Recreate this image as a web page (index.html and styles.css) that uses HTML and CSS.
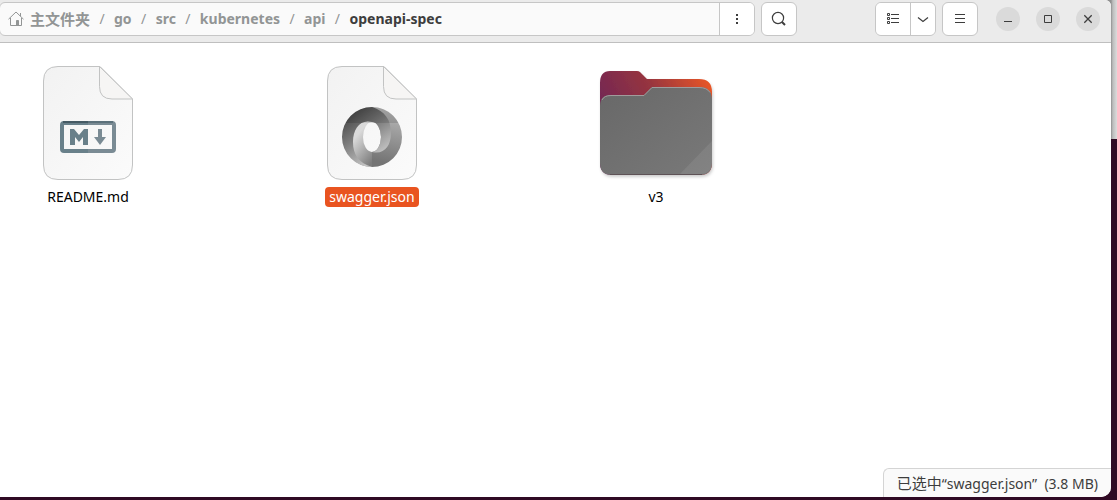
FILE: index.html
```html
<!DOCTYPE html>
<html lang="zh-CN">
<head>
    <meta charset="UTF-8">
    <meta name="viewport" content="width=device-width, initial-scale=1.0">
    <title>openapi-spec</title>
    <link rel="stylesheet" href="styles.css">
</head>
<body>
    <div class="window">
        <header class="header">
            <div class="pathbar">
                <nav class="crumbs">
                    <a class="crumb cjk" href="#">
                        <svg width="16" height="16" viewBox="0 0 16 16" fill="none" stroke="#929595">
                            <path d="M.5 8.200 8 1l7.500 7.200M2.500 7v7.500h11V7M12.500 5V2"/>
                            <path d="M8.500 9.500h2v5h-2z" fill="#929595"/>
                        </svg>主文件夹</a>
                    <span class="slash">/</span>
                    <a class="crumb" href="#">go</a>
                    <span class="slash">/</span>
                    <a class="crumb" href="#">src</a>
                    <span class="slash">/</span>
                    <a class="crumb" href="#">kubernetes</a>
                    <span class="slash">/</span>
                    <a class="crumb" href="#">api</a>
                    <span class="slash">/</span>
                    <a class="crumb current" href="#">openapi-spec</a>
                </nav>
                <button class="path-menu" aria-label="菜单">
                    <svg width="16" height="16" viewBox="0 0 16 16" fill="#3d3d3d"><path d="M7 3h2v2H7zM7 7h2v2H7zM7 11h2v2H7z"/></svg>
                </button>
            </div>
            <button class="tool search" aria-label="搜索">
                <svg width="16" height="16" viewBox="0 0 16 16" fill="none" stroke="#3d3d3d"><circle cx="7" cy="7" r="5.600" stroke-width="1.200"/><path d="m11 11 3 3" stroke-width="2"/></svg>
            </button>
            <div class="view-switch">
                <button class="view-list" aria-label="列表">
                    <svg width="16" height="16" viewBox="0 0 16 16" fill="none" stroke="#3d3d3d"><path d="M2.500 2.500h2v2h-2zM2.500 6.500h2v2h-2zM2.500 10.500h2v2h-2zM6 3.500h8M6 7.500h8M6 11.500h8"/></svg>
                </button>
                <button class="view-options" aria-label="视图选项">
                    <svg width="12" height="16" viewBox="0 0 12 16" fill="none" stroke="#3d3d3d" stroke-width="1.200"><path d="m1 6.500 5 4 5-4"/></svg>
                </button>
            </div>
            <button class="tool" aria-label="主菜单">
                <svg width="16" height="16" viewBox="0 0 16 16" stroke="#3d3d3d"><path d="M3 3.500h10M3 7.500h10M3 11.500h10"/></svg>
            </button>
            <div class="controls">
                <button class="control" aria-label="最小化">
                    <svg width="16" height="16" viewBox="0 0 16 16" stroke="#3d3d3d"><path d="M4 10.500h8"/></svg>
                </button>
                <button class="control" aria-label="最大化">
                    <svg width="16" height="16" viewBox="0 0 16 16" fill="none" stroke="#3d3d3d"><path d="M4.500 4.500h7v7h-7z"/></svg>
                </button>
                <button class="control" aria-label="关闭">
                    <svg width="16" height="16" viewBox="0 0 16 16" stroke="#3d3d3d" stroke-width="1.300"><path d="m4.300 4.300 7.400 7.400M11.700 4.300l-7.400 7.400"/></svg>
                </button>
            </div>
        </header>

        <main class="files">
            <div class="file">
                <svg class="icon" width="120" height="120" viewBox="0 0 120 120">
                    <defs>
                        <linearGradient id="paper" x1="0" y1="0" x2="1" y2="1">
                            <stop offset="0" stop-color="#f2f2f2"/>
                            <stop offset="1" stop-color="#fbfbfb"/>
                        </linearGradient>
                    </defs>
                    <path d="M30 3.500h42L104.500 36v66q0 14.500-14.500 14.500H30q-14.500 0-14.500-14.500V18Q15.500 3.500 30 3.500z" fill="url(#paper)" stroke="#c2c3c3"/>
                    <path d="M71.500 3.500v20q0 12.500 12.500 12.500h20.500z" fill="#f6f5f4" stroke="#c2c3c3"/>
                    <path d="M60 60H36q-2 0-2 2v24q0 2 2 2h24" fill="none" stroke="#69808a" stroke-width="4"/>
                    <path d="M60 60h24q2 0 2 2v24q0 2-2 2H60" fill="none" stroke="#7a8b94" stroke-width="4"/>
                    <path d="M60 59H35" stroke="#455a64" stroke-width="2"/>
                    <path d="M60 59h25" stroke="#5c717b" stroke-width="2"/>
                    <path d="M42 82V66h4l5 6 5-6h4v16h-5v-8l-4 5-4-5v8z" fill="#69808a"/>
                    <path d="M70 66h4v8h4l-6 8-6-8h4z" fill="#7a8b94"/>
                </svg>
                <span class="name">README.md</span>
            </div>
            <div class="file">
                <svg class="icon" width="120" height="120" viewBox="0 0 120 120">
                    <defs>
                        <linearGradient id="ringOuter" gradientUnits="userSpaceOnUse" x1="44" y1="46" x2="74" y2="88">
                            <stop offset="0" stop-color="#484848"/>
                            <stop offset=".45" stop-color="#7c7c7c"/>
                            <stop offset="1" stop-color="#c4c4c4"/>
                        </linearGradient>
                        <linearGradient id="ringRight" gradientUnits="userSpaceOnUse" x1="76" y1="46" x2="64" y2="98">
                            <stop offset="0" stop-color="#b8b8b8"/>
                            <stop offset="1" stop-color="#747474"/>
                        </linearGradient>
                        <linearGradient id="ringInner" gradientUnits="userSpaceOnUse" x1="42" y1="76" x2="64" y2="94">
                            <stop offset="0" stop-color="#dadada"/>
                            <stop offset="1" stop-color="#7c7c7c"/>
                        </linearGradient>
                    </defs>
                    <path d="M30 3.500h42L104.500 36v66q0 14.500-14.500 14.500H30q-14.500 0-14.500-14.500V18Q15.500 3.500 30 3.500z" fill="url(#paper)" stroke="#c2c3c3"/>
                    <path d="M71.500 3.500v20q0 12.500 12.500 12.500h20.500z" fill="#f6f5f4" stroke="#c2c3c3"/>
                    <path d="M60 44a30 30 0 0 1 0 60V89a9 15 0 0 0 0-30z" fill="url(#ringRight)"/>
                    <path d="M60 59a9 15 0 0 0 0 30v15a30 30 0 0 1-21-9V60z" fill="url(#ringInner)"/>
                    <path d="M60 59C48 56 41 66 41 79c0 13 6 21 19 25a30 30 0 0 1 0-60c13 4 19 13 19 26 0 13-7 22-19 19a9 15 0 0 0 0-30z" fill="url(#ringOuter)"/>
                    <path d="M33.500 60h53A30 30 0 0 0 60 44a30 30 0 0 0-26.500 16z" fill="#000" opacity=".12"/>
                </svg>
                <span class="name selected">swagger.json</span>
            </div>
            <div class="file">
                <svg class="icon" width="120" height="120" viewBox="0 0 120 120">
                    <defs>
                        <linearGradient id="folderBack" x1="0" y1=".5" x2="1" y2="0">
                            <stop offset="0" stop-color="#6d2558"/>
                            <stop offset=".5" stop-color="#96343f"/>
                            <stop offset="1" stop-color="#f35b24"/>
                        </linearGradient>
                        <linearGradient id="folderFront" x1="0" y1="0" x2="1" y2="1">
                            <stop offset="0" stop-color="#686868"/>
                            <stop offset="1" stop-color="#797979"/>
                        </linearGradient>
                        <filter id="folderShadow"><feDropShadow dx="1" dy="2" stdDeviation="1.500" flood-opacity=".2"/></filter>
                    </defs>
                    <path filter="url(#folderShadow)" d="M14 8h27q2 0 3 1l7 7h52q13 0 13 13v71q0 12-12 12H16q-12 0-12-12V20Q4 8 14 8z" fill="url(#folderBack)"/>
                    <path d="M4 43q0-11 11-11h33l8-8h47q13 0 13 13v63q0 12-12 12H16q-12 0-12-12z" fill="url(#folderFront)"/>
                    <path d="M6 37q2-4.500 9-4.500h33l8-8h47q8 0 11 5" fill="none" stroke="#a09c9c"/>
                    <path d="M14 111.500h92" stroke="#5e5256"/>
                    <path d="M84 111l32-33v21q0 12-12 12z" fill="#fff" opacity=".08"/>
                </svg>
                <span class="name">v3</span>
            </div>
        </main>

        <div class="status"><span class="cjk">已选中</span>“swagger.json” &nbsp;(3.8 MB)</div>
    </div>
</body>
</html>
```

FILE: styles.css
```css
* {
    box-sizing: border-box;
}

body {
    margin: 0;
    height: 100vh;
    padding: 0 6px 3px 0;
    overflow: hidden;
    background: linear-gradient(to right, #909090 50%, #bcbcbc 65%, #dcdcdc) right top / 12px 139px no-repeat #300a24;
    font-family: "Noto Sans", "Noto Sans CJK SC", sans-serif;
    font-size: 14px;
    line-height: 20px;
    color: #000;
}

.window {
    position: relative;
    display: flex;
    flex-direction: column;
    height: 100%;
    background-color: #fff;
    border-radius: 0 6px 10px 0;
    overflow: hidden;
}

button {
    display: flex;
    align-items: center;
    justify-content: center;
    padding: 0;
    border: none;
    background-color: #fff;
    cursor: pointer;
}

.header {
    display: flex;
    align-items: flex-start;
    height: 43px;
    padding: 2px 11px 0 0;
    background-color: #ebebeb;
    border-bottom: 1px solid #bfbfbf;
}

.pathbar {
    display: flex;
    flex: 1;
    max-width: 756px;
    height: 34px;
    margin-left: -1px;
    border: 1px solid #c6c6c6;
    border-radius: 6px;
    background-color: #fafafa;
    overflow: hidden;
}

.crumbs {
    display: flex;
    flex: 1;
    align-items: center;
    gap: 9px;
    padding-left: 8px;
    font-weight: bold;
}

.crumb {
    display: flex;
    align-items: center;
    gap: 6px;
    color: #929595;
    text-decoration: none;
}

.current {
    color: #3d3d3d;
}

.slash {
    width: 6px;
    color: #929595;
    font-weight: normal;
    text-align: center;
}

.cjk {
    font-size: 15px;
}

.path-menu {
    width: 35px;
    border-left: 1px solid #c6c6c6;
}

.tool {
    width: 36px;
    height: 34px;
    border: 1px solid #c6c6c6;
    border-radius: 6px;
}

.search {
    margin: 0 auto 0 6px;
}

.view-switch {
    display: flex;
    height: 34px;
    margin-right: 6px;
    border: 1px solid #c6c6c6;
    border-radius: 6px;
    overflow: hidden;
}

.view-list {
    width: 34px;
}

.view-options {
    width: 25px;
    border-left: 1px solid #c6c6c6;
}

.controls {
    display: flex;
    gap: 16px;
    margin: 5px 0 0 18px;
}

.control {
    width: 24px;
    height: 24px;
    border-radius: 50%;
    background-color: #dadada;
}

.files {
    display: grid;
    grid-template-columns: repeat(auto-fill, 120px);
    gap: 24px 164px;
    padding: 20px 28px;
}

.file {
    display: flex;
    flex-direction: column;
    align-items: center;
    gap: 4px;
}

.name {
    padding: 0 4px;
    border-radius: 4px;
}

.selected {
    background-color: #e95420;
    color: #fff;
}

/* floating selection info */
.status {
    position: absolute;
    right: 0;
    bottom: 0;
    padding: 4px 13px 3px;
    border: 1px solid #d4d4d4;
    border-width: 1px 0 0 1px;
    border-radius: 6px 0 0 0;
    background-color: #fafafa;
    color: #3d3d3d;
}
```
